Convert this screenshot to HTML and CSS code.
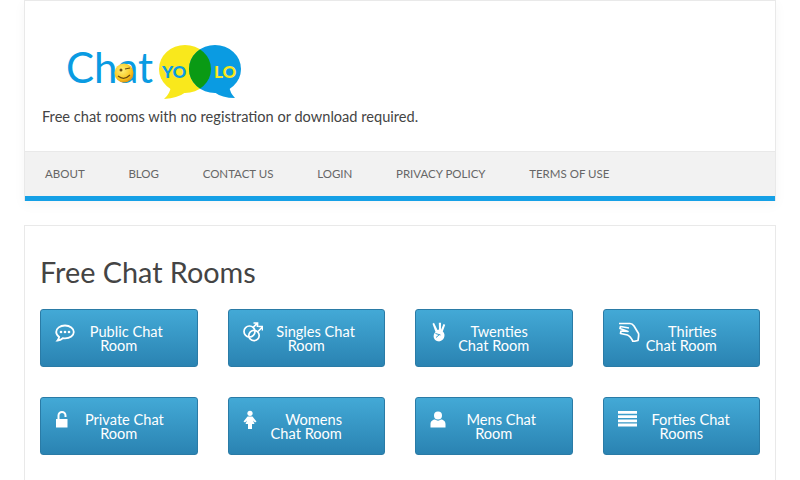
FILE: index.html
```html
<!DOCTYPE html>
<html lang="en">
  <head>
    <meta charset="UTF-8" />
    <title>Free Chat Rooms - ChatYolo</title>
    <link rel="stylesheet" href="styles.css">
  </head>
  <body>
    <header class="site-header">
      <div class="branding">
        <svg class="logo" viewBox="0 0 190 65" width="190" height="65">
          <defs>
            <clipPath id="yellow-clip"><ellipse cx="125" cy="29" rx="26" ry="24" /></clipPath>
            <radialGradient id="smile" cx="0.4" cy="0.35" r="0.7">
              <stop offset="0" stop-color="#fff27a" />
              <stop offset="0.7" stop-color="#f9c51c" />
              <stop offset="1" stop-color="#d98a10" />
            </radialGradient>
          </defs>
          <text class="logo-chat" x="6" y="43">Chat</text>
          <circle cx="64" cy="33" r="9.5" fill="url(#smile)" />
          <circle cx="61" cy="30" r="1.5" fill="#6b4a10" />
          <path d="M65 29l5 -1M58 36q6 5 12 -1" fill="none" stroke="#6b4a10" stroke-width="1.2" />
          <path d="M111 46Q110 54 104 59Q118 58 126 52Z" fill="#f9e81c" />
          <path d="M169 46Q170 53 175 58Q162 58 154 52Z" fill="#0a9be2" />
          <ellipse cx="125" cy="29" rx="26" ry="24" fill="#f9e81c" />
          <ellipse cx="155" cy="29" rx="26" ry="24" fill="#0a9be2" />
          <ellipse cx="155" cy="29" rx="26" ry="24" fill="#0a9a14" clip-path="url(#yellow-clip)" />
          <text class="logo-yo" x="102" y="38">YO</text>
          <text class="logo-lo" x="154" y="38">LO</text>
        </svg>
        <p class="tagline">Free chat rooms with no registration or download required.</p>
      </div>
      <nav class="main-nav">
        <a href="#">About</a>
        <a href="#">Blog</a>
        <a href="#">Contact Us</a>
        <a href="#">Login</a>
        <a href="#">Privacy Policy</a>
        <a href="#">Terms of Use</a>
      </nav>
    </header>

    <main class="content">
      <h1>Free Chat Rooms</h1>
      <div class="room-grid">
        <a class="room-btn" href="#">
          <svg class="room-icon" viewBox="0 -2 20 20"><path d="M10 1.500C5 1.500 1.200 4.400 1.200 8c0 2 1.200 3.700 3 4.900-.2 1.300-.8 2.500-1.700 3.600 2-.2 3.900-1.100 5.300-2.300.7.100 1.400.2 2.200.2 5 0 8.800-2.900 8.800-6.400S15 1.500 10 1.500z" fill="none" stroke="#fff" stroke-width="1.800" /><circle cx="6" cy="8" r="1.300" fill="#fff" /><circle cx="10" cy="8" r="1.300" fill="#fff" /><circle cx="14" cy="8" r="1.300" fill="#fff" /></svg>
          <span>&nbsp;&nbsp;&nbsp;&nbsp;Public Chat<br>Room</span>
        </a>
        <a class="room-btn" href="#">
          <svg class="room-icon" viewBox="0 0 20 20"><g fill="none" stroke="#fff" stroke-width="1.700"><circle cx="6.500" cy="9.500" r="5.500" /><circle cx="11" cy="13.500" r="5.200" /><path d="M10 5.500L14 1.500M10.500 1h4v4M15 9.500L19 5.500M15.500 4.500H19.500V8.500" /></g></svg>
          <span>&nbsp;&nbsp;&nbsp;&nbsp;&nbsp;Singles Chat<br>Room</span>
        </a>
        <a class="room-btn" href="#">
          <svg class="room-icon" viewBox="0 0 20 20"><path d="M4 .800L7.500 8L9 7.600L8.800 .800L11 .800L11 7.800L13.500 2L15.200 2.800L12.800 9.500C14.500 11 15 13.500 14 15.800C13 18.200 10.500 19.800 8 19.300C5 18.800 3.300 16 3.700 13.500C3.900 12 4.500 11 5.500 10L2.500 1.800Z" fill="#fff" /><path d="M5.500 11.500L10.500 13M6 15.500L9.500 12.500" fill="none" stroke="#3b9dcb" stroke-width="1" /></svg>
          <span>&nbsp;&nbsp;&nbsp;Twenties<br>Chat Room</span>
        </a>
        <a class="room-btn" href="#">
          <svg class="room-icon wide" viewBox="0 0 22 20"><path d="M1 1.500H12C14 1.500 15 2.500 16 4L20.500 11.500C21 13 20.500 15 20 18.500L15 19.500C13.500 16.500 12 14 9.500 13L2.500 11.500L3 9L10 9.500L2 6.500L2.500 4.500L11 6" fill="none" stroke="#fff" stroke-width="1.700" stroke-linejoin="round" /></svg>
          <span>&nbsp;&nbsp;&nbsp;&nbsp;&nbsp;&nbsp;Thirties<br>Chat Room</span>
        </a>
        <a class="room-btn" href="#">
          <svg class="room-icon" viewBox="1 0 20 20"><path d="M2 9h11.500v8.500H2z" fill="#fff" /><path d="M4.500 9.500V5.500a3.500 3.500 0 0 1 7 0V7" fill="none" stroke="#fff" stroke-width="2" /></svg>
          <span>&nbsp;&nbsp;&nbsp;Private Chat<br>Room</span>
        </a>
        <a class="room-btn" href="#">
          <svg class="room-icon" viewBox="0 0 20 20"><circle cx="7" cy="3.300" r="2.600" fill="#fff" /><path d="M4.500 6.500H9.500L13.500 11.500L12 12.500L10 10.500L11.500 14H9V19H5V14H2.500L4 10.500L2 12.500L.5 11.500Z" fill="#fff" /></svg>
          <span>&nbsp;&nbsp;&nbsp;&nbsp;Womens<br>Chat Room</span>
        </a>
        <a class="room-btn" href="#">
          <svg class="room-icon" viewBox="0 0 20 20"><circle cx="8" cy="5.500" r="4" fill="#fff" /><path d="M.500 17.500V14C.500 11 3 9.500 5 9.500C7 11 9 11 11 9.500C13 9.500 15.500 11 15.500 14V17.500Z" fill="#fff" /></svg>
          <span>&nbsp;&nbsp;&nbsp;&nbsp;Mens Chat<br>Room</span>
        </a>
        <a class="room-btn" href="#">
          <svg class="room-icon" viewBox="0 0 20 20"><path d="M0 1h19v2.800H0zM0 5.200h19v2.800H0zM0 9.400h19v2.800H0zM0 13.600h19v2.800H0z" fill="#fff" /></svg>
          <span>&nbsp;&nbsp;&nbsp;&nbsp;&nbsp;Forties Chat<br>Rooms</span>
        </a>
      </div>
    </main>
  </body>
</html>
```

FILE: styles.css
```css
:root {
  --brand-blue: #0a9be2;
  --border-color: #e9e9e9;
  --text-color: #444;
}

* {
  margin: 0;
  padding: 0;
  box-sizing: border-box;
  font-family: "Lato", "Open Sans", sans-serif;
}

html,
body {
  height: 480px;
  overflow: hidden;
}

body {
  background-color: #fff;
  color: var(--text-color);
  padding: 0 24px;
}

.site-header {
  border: 1px solid var(--border-color);
  border-bottom: none;
  box-shadow: 0 4px 12px rgba(0, 0, 0, 0.04);
  margin-bottom: 24px;
}

.branding {
  height: 150px;
  padding: 39px 17px 0;
}

.logo {
  display: block;
  margin-left: 18px;
}

.logo-chat {
  font-size: 42px;
  fill: var(--brand-blue);
}

.logo-yo,
.logo-lo {
  font-size: 17px;
  font-weight: 900;
}

.logo-yo {
  fill: var(--brand-blue);
}

.logo-lo {
  fill: #f9e81c;
}

.tagline {
  font-size: 14.6px;
  line-height: 20px;
  margin-top: 2px;
}

.main-nav {
  display: flex;
  gap: 43.7px;
  height: 50px;
  padding: 0 20px 2px;
  align-items: center;
  background-color: #f2f2f2;
  border-top: 1px solid var(--border-color);
  border-bottom: 5px solid #15a0e6;
}

.main-nav a {
  font-size: 11.5px;
  color: #666;
  text-decoration: none;
  text-transform: uppercase;
}

.content {
  height: 300px;
  border: 1px solid var(--border-color);
  padding: 28px 15px 0;
}

h1 {
  font-size: 28.8px;
  font-weight: 400;
  line-height: 36px;
  margin-bottom: 19px;
}

.room-grid {
  display: grid;
  grid-template-columns: repeat(4, 1fr);
  gap: 30px;
}

.room-btn {
  position: relative;
  display: flex;
  align-items: center;
  justify-content: center;
  height: 58px;
  padding-top: 2px;
  background: linear-gradient(#43a9d6, #2a83b2);
  border: 1px solid #2a7ba6;
  border-radius: 3px;
  color: #fff;
  font-size: 14.6px;
  line-height: 14.5px;
  text-align: center;
  text-decoration: none;
}

.room-icon {
  position: absolute;
  left: 14px;
  top: 12px;
  width: 20px;
  height: 20px;
}

.room-icon.wide {
  width: 22px;
}
```
